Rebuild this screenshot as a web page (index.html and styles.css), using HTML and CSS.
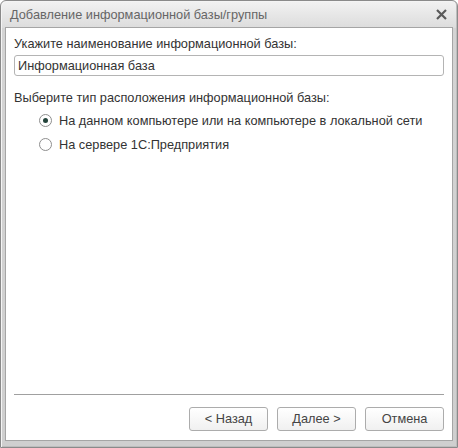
FILE: index.html
```html
<!DOCTYPE html>
<html lang="ru">
<head>
<meta charset="utf-8">
<title>Добавление информационной базы/группы</title>
<link rel="stylesheet" href="styles.css">
</head>
<body>
<div class="window">
  <div class="titlebar">
    <span class="title">Добавление информационной базы/группы</span>
    <svg class="close" width="11" height="11" viewBox="0 0 11 11"><path d="M1 1 L10 10 M10 1 L1 10" stroke="#5a5a5a" stroke-width="2.2" fill="none"/></svg>
  </div>
  <div class="content">
    <div class="main">
      <div class="label">Укажите наименование информационной базы:</div>
      <div class="input">Информационная база</div>
      <div class="label label2">Выберите тип расположения информационной базы:</div>
      <div class="radios">
        <div class="radio-row"><span class="radio checked"></span><span>На данном компьютере или на компьютере в локальной сети</span></div>
        <div class="radio-row"><span class="radio"></span><span>На сервере 1С:Предприятия</span></div>
      </div>
    </div>
    <div class="footer">
      <div class="sep"></div>
      <div class="buttons">
        <div class="btn">&lt; Назад</div>
        <div class="btn">Далее &gt;</div>
        <div class="btn">Отмена</div>
      </div>
    </div>
  </div>
</div>
</body>
</html>
```
FILE: styles.css
```css
html, body { margin: 0; padding: 0; background: #fff; }
body { font-family: "Liberation Sans", Arial, sans-serif; font-size: 12.75px; color: #333; }
.window {
  width: 458px; height: 448px; box-sizing: border-box;
  border: 1px solid #8a8a8a; border-radius: 6px 6px 0 0;
  background: linear-gradient(to bottom, #f2f2f2 0, #dcdcdc 27px, #d4d4d4 27px, #cfcfcf 100%);
  display: flex; flex-direction: column;
  box-shadow: inset 1px 1px 0 #f4f4f4, inset -1px -1px 0 #bdbdbd;
}
.titlebar {
  height: 26px; display: flex; align-items: center; justify-content: space-between;
  padding: 0 10px 0 9px; flex: none;
}
.title { color: #666; }
.close { display: block; margin-top: 1px; }
.content {
  flex: 1; margin: 0 4px 6px 4px; background: #fff;
  border: 1px solid #a5a5a5; display: flex; flex-direction: column;
}
.main { flex: 1; padding: 8px 8px 0 8px; }
.label { line-height: 16px; }
.input {
  margin-top: 3px; height: 21px; box-sizing: border-box; border: 1px solid #b4b4b4;
  border-radius: 3px; padding: 0 3px; line-height: 19px; color: #333;
}
.label2 { margin-top: 14px; }
.radios { padding-left: 25px; margin-top: 2px; }
.radio-row { display: flex; align-items: center; height: 24px; gap: 7px; }
.radio {
  width: 13px; height: 13px; box-sizing: border-box; border: 1px solid #8e8e8e;
  border-radius: 50%; background: #fff; display: flex; align-items: center; justify-content: center;
}
.radio.checked::after { content: ""; width: 5px; height: 5px; border-radius: 50%; background: #24443b; }
.footer { padding: 0 8px 9px 8px; }
.sep { height: 1px; background: #a0a0a0; }
.buttons { display: flex; justify-content: flex-end; gap: 9px; margin-top: 12px; }
.btn {
  width: 79px; height: 24px; box-sizing: border-box; border: 1px solid #acacac; border-radius: 3px;
  background: linear-gradient(to bottom, #ffffff, #f0f0f0); text-align: center; line-height: 22px; color: #444;
}
```
